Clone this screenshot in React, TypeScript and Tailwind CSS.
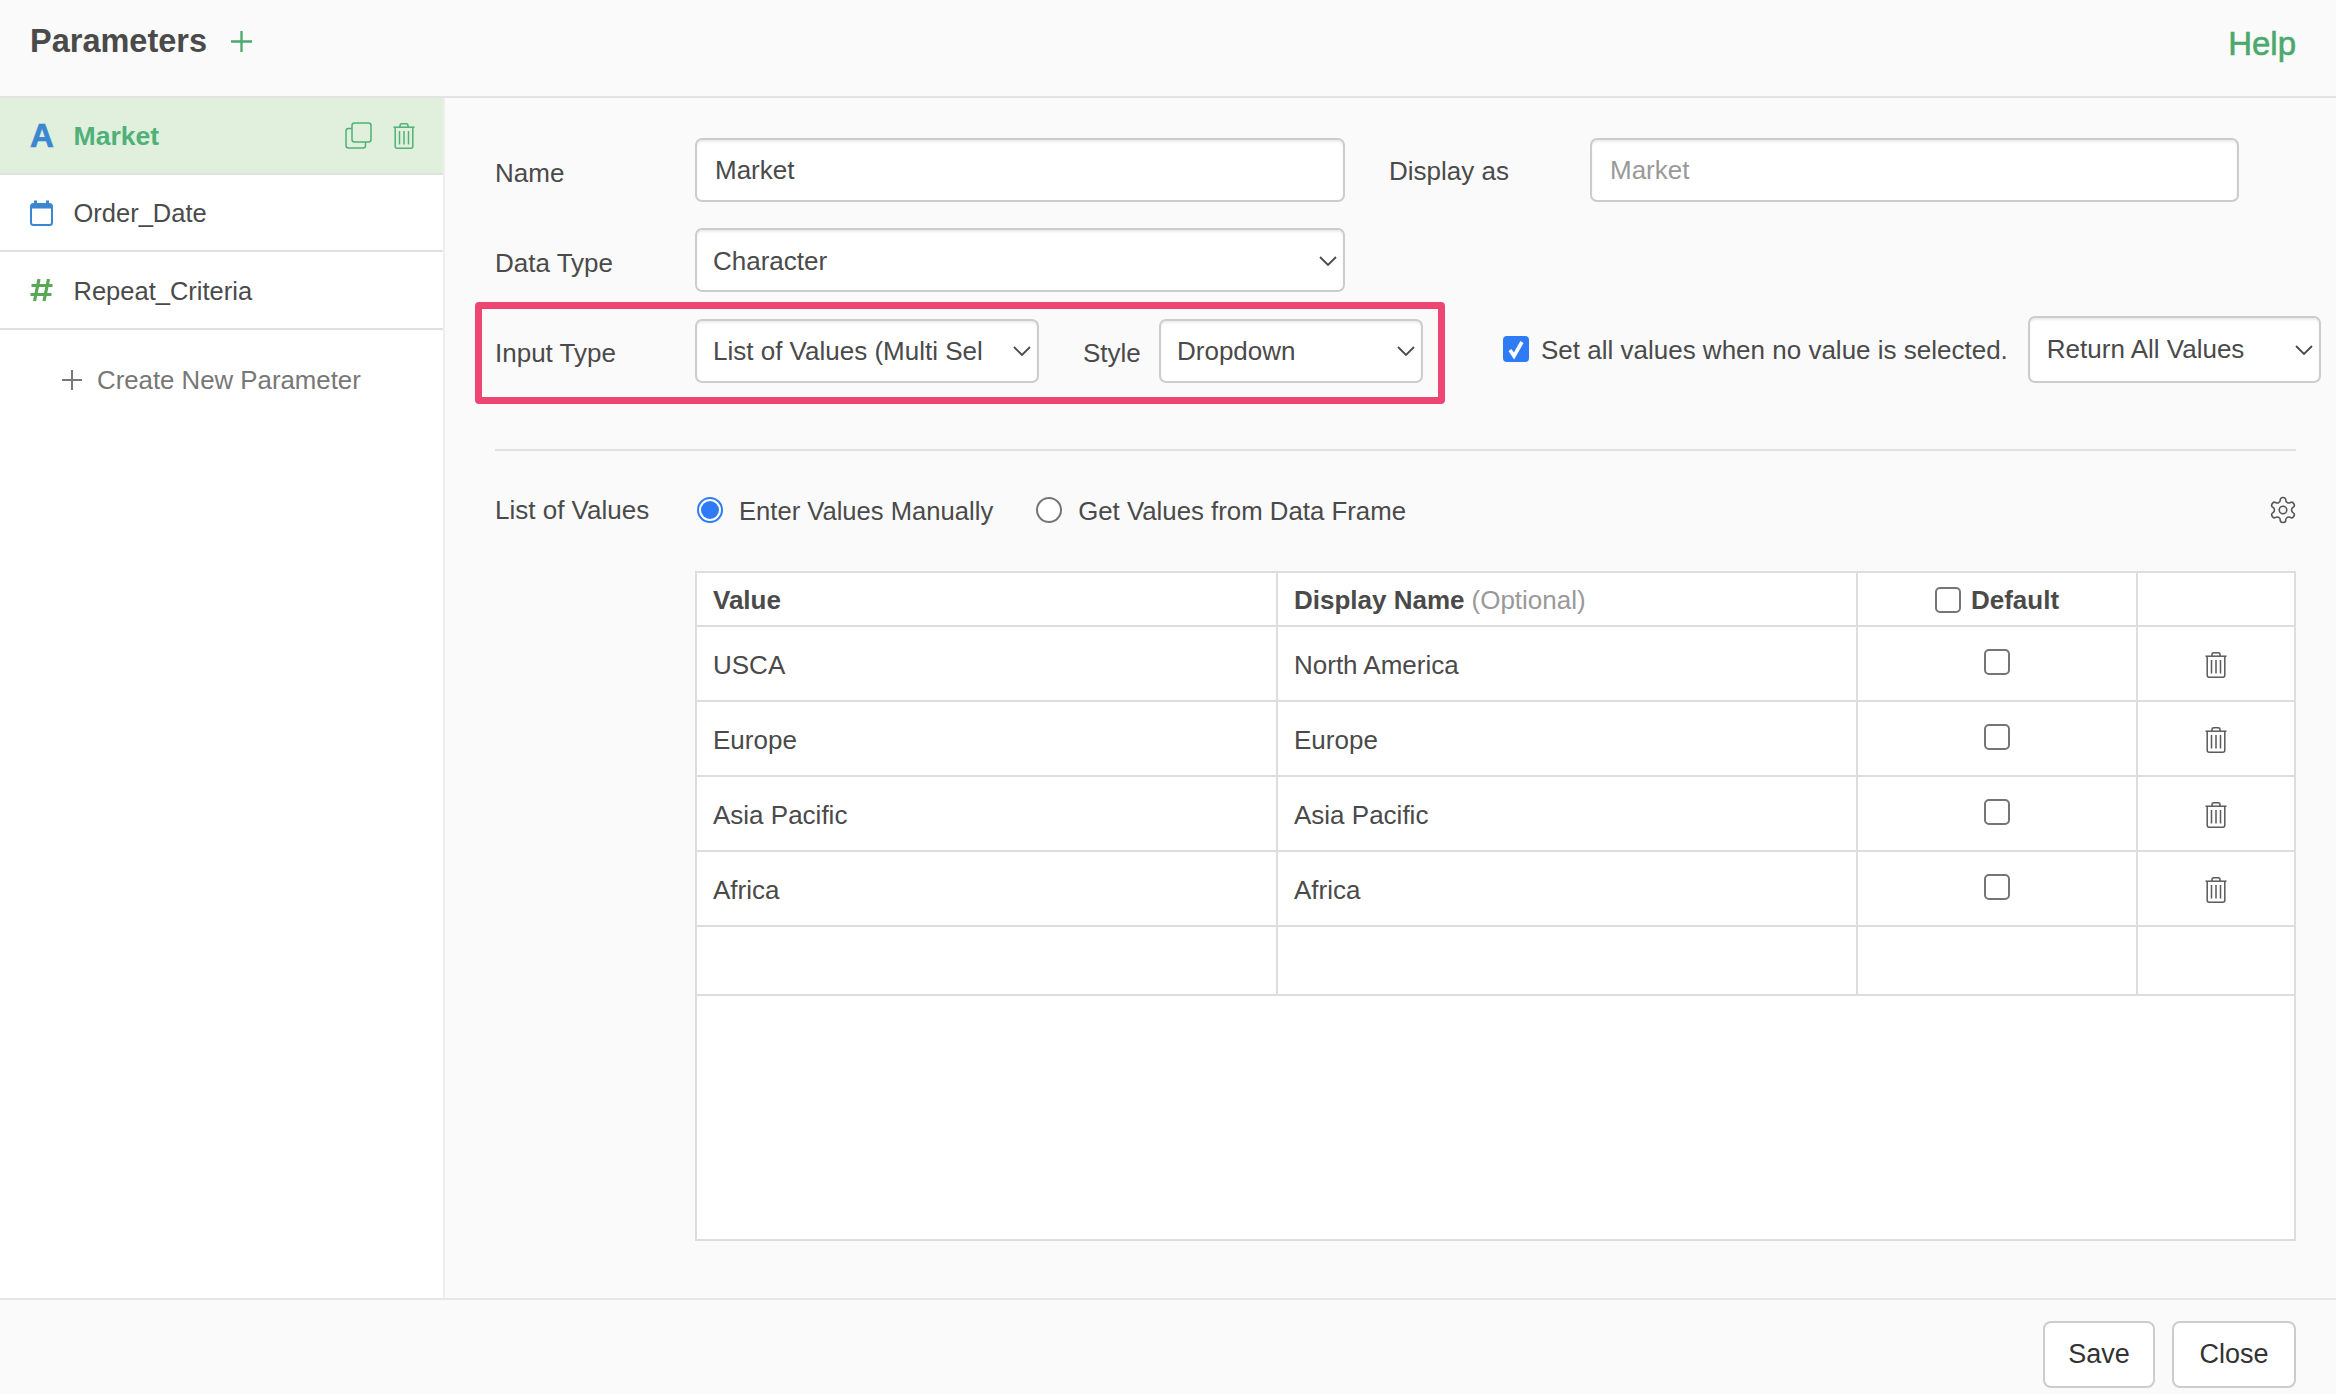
import React from "react";

const font = { fontFamily: '"Liberation Sans", Arial, sans-serif' };

function Chevron() {
  return (
    <svg width="18" height="10" viewBox="0 0 18 10" fill="none" stroke="#4a4a4a" strokeWidth="1.8" className="shrink-0">
      <path d="M1 1l8 8 8-8" />
    </svg>
  );
}

function Trash({ color = "#5a5a5a", className = "" }: { color?: string; className?: string }) {
  return (
    <svg width="22" height="26" viewBox="0 0 22 26" fill="none" stroke={color} strokeWidth="1.5" className={className}>
      <path d="M0.5 4.2h21" />
      <path d="M7 4V2.5C7 1.4 8 .8 9 .8h4c1 0 2 .6 2 1.7V4" />
      <path d="M2.2 4.2V23.2c0 1.2.8 2 2 2h13.6c1.2 0 2-.8 2-2V4.2" />
      <path d="M6.5 8v13.5M11 8v13.5M15.5 8v13.5" />
    </svg>
  );
}

function Copy() {
  return (
    <svg width="27" height="27" viewBox="0 0 27 27" fill="none" stroke="#4fb078" strokeWidth="1.5">
      <rect x="7" y="1" width="19" height="19" rx="2.5" />
      <path d="M7 6.5H3.5C2 6.5 1 7.5 1 9v14.5C1 25 2 26 3.5 26H18c1.5 0 2.5-1 2.5-2.5V20" />
    </svg>
  );
}

function Gear() {
  return (
    <svg width="30" height="30" viewBox="0 0 24 24" fill="none" stroke="#555555" strokeWidth="1.25" strokeLinejoin="round">
      <path d="M12.22 2h-.44a2 2 0 0 0-2 2v.18a2 2 0 0 1-1 1.73l-.43.25a2 2 0 0 1-2 0l-.15-.08a2 2 0 0 0-2.73.73l-.22.38a2 2 0 0 0 .73 2.73l.15.1a2 2 0 0 1 1 1.72v.51a2 2 0 0 1-1 1.74l-.15.09a2 2 0 0 0-.73 2.73l.22.38a2 2 0 0 0 2.73.73l.15-.08a2 2 0 0 1 2 0l.43.25a2 2 0 0 1 1 1.73V20a2 2 0 0 0 2 2h.44a2 2 0 0 0 2-2v-.18a2 2 0 0 1 1-1.73l.43-.25a2 2 0 0 1 2 0l.15.08a2 2 0 0 0 2.73-.73l.22-.39a2 2 0 0 0-.73-2.73l-.15-.08a2 2 0 0 1-1-1.74v-.5a2 2 0 0 1 1-1.74l.15-.09a2 2 0 0 0 .73-2.73l-.22-.38a2 2 0 0 0-2.73-.73l-.15.08a2 2 0 0 1-2 0l-.43-.25a2 2 0 0 1-1-1.73V4a2 2 0 0 0-2-2z" />
      <circle cx="12" cy="12" r="3" />
    </svg>
  );
}

function Plus({ size, color, width = 2 }: { size: number; color: string; width?: number }) {
  return (
    <svg width={size} height={size} viewBox="0 0 20 20" fill="none" stroke={color} strokeWidth={width}>
      <path d="M10 0v20M0 10h20" />
    </svg>
  );
}

function Calendar() {
  return (
    <svg width="23" height="26" viewBox="0 0 23 26" fill="none">
      <rect x="1" y="4" width="21" height="21" rx="2.5" stroke="#3b86d1" strokeWidth="2" />
      <path d="M1 5h21v3.5H1z" fill="#3b86d1" />
      <path d="M5.5 0.5v5M17.5 0.5v5" stroke="#3b86d1" strokeWidth="3" />
    </svg>
  );
}

function Hash() {
  return (
    <svg width="23" height="24" viewBox="0 0 23 24" fill="none" stroke="#5aa755" strokeWidth="3.2">
      <path d="M9 1L4.5 23M18.5 1L14 23M1.5 7.5h21M0.5 16.5h21" />
    </svg>
  );
}

function Box({ className = "" }: { className?: string }) {
  return <div className={`w-[26px] h-[26px] shrink-0 rounded-[5px] border-2 border-[#757575] bg-white ${className}`} />;
}

function Select({ text, className }: { text: string; className: string }) {
  return (
    <div className={`flex items-center justify-between shrink-0 bg-white border-2 border-[#cccccc] rounded-[7px] shadow-[inset_0_2px_2px_rgba(0,0,0,0.08)] pr-[6px] text-[#4a4a4a] ${className}`}>
      <span className="whitespace-nowrap">{text}</span>
      <Chevron />
    </div>
  );
}

const rows = [
  ["USCA", "North America"],
  ["Europe", "Europe"],
  ["Asia Pacific", "Asia Pacific"],
  ["Africa", "Africa"],
];

export default function App() {
  return (
    <div style={font} className="w-[2336px] h-[1394px] flex flex-col bg-[#fafafa] text-[26px] text-[#4a4a4a] overflow-hidden">
      <header className="h-[98px] shrink-0 flex items-center justify-between border-b-2 border-[#e3e3e3] pl-[30px] pr-[40px] pb-[13px]">
        <div className="flex items-center">
          <span className="text-[32.5px] font-bold text-[#4a4a4a]">Parameters</span>
          <span className="ml-[24px]"><Plus size={21} color="#4aa96c" width={2.2} /></span>
        </div>
        <span className="text-[33px] text-[#4aa96c] pt-[5px] [-webkit-text-stroke:0.6px_#4aa96c]">Help</span>
      </header>

      <div className="flex-1 flex min-h-0">
        <aside className="w-[445px] shrink-0 bg-white border-r-2 border-[#eeeeee] flex flex-col">
          <div className="h-[77px] border-b-2 border-[#e0e0e0] bg-[#e0f0dc] flex items-center pl-[30px] pr-[28px]">
            <span className="w-[43.5px] text-[33px] font-bold text-[#3b86d1] leading-none [-webkit-text-stroke:0.7px_#3b86d1]">A</span>
            <span className="flex-1 font-bold text-[26.6px] text-[#4fb078] pt-[2px]">Market</span>
            <span className="mr-[21px] flex"><Copy /></span>
            <Trash color="#4fb078" />
          </div>
          <div className="h-[77px] border-b-2 border-[#e0e0e0] flex items-center pl-[30px]">
            <span className="w-[43.5px] flex"><Calendar /></span>
            <span className="text-[25.5px] pt-[2px]">Order_Date</span>
          </div>
          <div className="h-[78px] border-b-2 border-[#e0e0e0] flex items-center pl-[30px]">
            <span className="w-[43.5px] flex"><Hash /></span>
            <span className="text-[25.5px] pt-[2px]">Repeat_Criteria</span>
          </div>
          <div className="flex items-center pl-[62px] pt-[31px] text-[#777777]">
            <span className="mr-[15px] flex"><Plus size={20} color="#777777" /></span>
            <span className="text-[25.8px]">Create New Parameter</span>
          </div>
        </aside>

        <main className="flex-1 min-w-0 pl-[50px] pr-[40px] pt-[40px] flex flex-col">
          <div className="flex items-center h-[64px]">
            <span className="w-[200px] shrink-0 pt-[6px]">Name</span>
            <input readOnly value="Market" className="w-[650px] h-[64px] shrink-0 bg-white border-2 border-[#cccccc] rounded-[7px] shadow-[inset_0_2px_2px_rgba(0,0,0,0.08)] px-[18px] text-[#4a4a4a] outline-none" />
            <span className="ml-[44px] w-[201px] shrink-0 pt-[2px]">Display as</span>
            <input readOnly placeholder="Market" className="w-[649px] h-[64px] shrink-0 bg-white border-2 border-[#cccccc] rounded-[7px] shadow-[inset_0_2px_2px_rgba(0,0,0,0.08)] px-[18px] placeholder:text-[#999999] outline-none" />
          </div>

          <div className="flex items-center h-[64px] mt-[26px]">
            <span className="w-[200px] shrink-0 pt-[6px]">Data Type</span>
            <Select text="Character" className="w-[650px] h-[64px] pt-[2px] pl-[16px]" />
          </div>

          <div className="flex items-center mt-[10px] h-[102px]">
            <div className="flex items-center shrink-0 w-[970px] h-[102px] -ml-[20px] pl-[13px] border-[7px] border-[#ee4672] rounded-[4px]">
              <span className="w-[200px] shrink-0 pt-[1px]">Input Type</span>
              <Select text="List of Values (Multi Sel" className="w-[344px] h-[64px] -mt-[4px] pl-[16px]" />
              <span className="ml-[44px] w-[76px] shrink-0 pt-[1px]">Style</span>
              <Select text="Dropdown" className="w-[264px] h-[64px] -mt-[4px] pl-[16px]" />
            </div>
            <div className="ml-[58px] flex items-center shrink-0 -mt-[6px]">
              <div className="w-[26px] h-[26px] shrink-0 mb-[2px] rounded-[4px] bg-[#2f7bf6]">
                <svg width="26" height="26" viewBox="0 0 26 26" fill="none" stroke="#ffffff" strokeWidth="3.6"><path d="M7 14l4 6L19 6" /></svg>
              </div>
              <span className="ml-[12px] whitespace-nowrap">Set all values when no value is selected.</span>
            </div>
            <Select text="Return All Values" className="ml-[20px] w-[293px] h-[67px] -mt-[7px] pl-[17px]" />
          </div>

          <div className="mt-[45px] border-t-2 border-[#e0e0e0]" />

          <div className="flex items-center h-[40px] mt-[39px] text-[25.6px]">
            <span className="w-[202px] shrink-0 text-[26px]">List of Values</span>
            <span className="w-[26px] h-[26px] shrink-0 rounded-full border-2 border-[#2f7bf6] bg-white flex items-center justify-center mr-[16px]">
              <span className="w-[18px] h-[18px] rounded-full bg-[#2f7bf6]" />
            </span>
            <span className="pt-[2px]">Enter Values Manually</span>
            <span className="w-[26px] h-[26px] shrink-0 rounded-full border-2 border-[#757575] bg-white ml-[43px] mr-[16px]" />
            <span className="pt-[2px] text-[25.8px]">Get Values from Data Frame</span>
            <span className="ml-auto -mr-[2px] flex"><Gear /></span>
          </div>

          <div className="mt-[41px] ml-[200px] h-[670px] flex flex-col border-2 border-[#dddddd] bg-white">
            <div className="flex h-[54px] border-b-2 border-[#dddddd] font-bold">
              <div className="w-[581px] border-r-2 border-[#dddddd] flex items-center pl-[16px] pt-[2px]">Value</div>
              <div className="w-[580px] border-r-2 border-[#dddddd] flex items-center pl-[16px] pt-[2px]">Display Name<span className="ml-[7px] font-normal text-[#999999]">(Optional)</span></div>
              <div className="w-[280px] border-r-2 border-[#dddddd] flex items-center justify-center pt-[2px]"><Box className="mr-[10px]" />Default</div>
              <div className="flex-1" />
            </div>
            {rows.map(([a, b]) => (
              <div key={a} className="flex h-[75px] border-b-2 border-[#dddddd]">
                <div className="w-[581px] border-r-2 border-[#dddddd] flex items-center pl-[16px] pt-[4px]">{a}</div>
                <div className="w-[580px] border-r-2 border-[#dddddd] flex items-center pl-[16px] pt-[4px]">{b}</div>
                <div className="w-[280px] border-r-2 border-[#dddddd] flex items-center justify-center"><Box className="-mt-[4px]" /></div>
                <div className="flex-1 flex items-center justify-center pt-[2px]"><Trash /></div>
              </div>
            ))}
            <div className="flex h-[69px] border-b-2 border-[#dddddd]">
              <div className="w-[581px] border-r-2 border-[#dddddd]" />
              <div className="w-[580px] border-r-2 border-[#dddddd]" />
              <div className="w-[280px] border-r-2 border-[#dddddd]" />
              <div className="flex-1" />
            </div>
          </div>
        </main>
      </div>

      <footer className="h-[96px] shrink-0 border-t-2 border-[#e6e6e6] flex items-center justify-end pr-[40px] gap-[17px] text-[27px] text-[#333333] pt-[15px]">
        <button className="w-[112px] h-[67px] bg-white border-2 border-[#cccccc] rounded-[8px]">Save</button>
        <button className="w-[124px] h-[67px] bg-white border-2 border-[#cccccc] rounded-[8px]">Close</button>
      </footer>
    </div>
  );
}
